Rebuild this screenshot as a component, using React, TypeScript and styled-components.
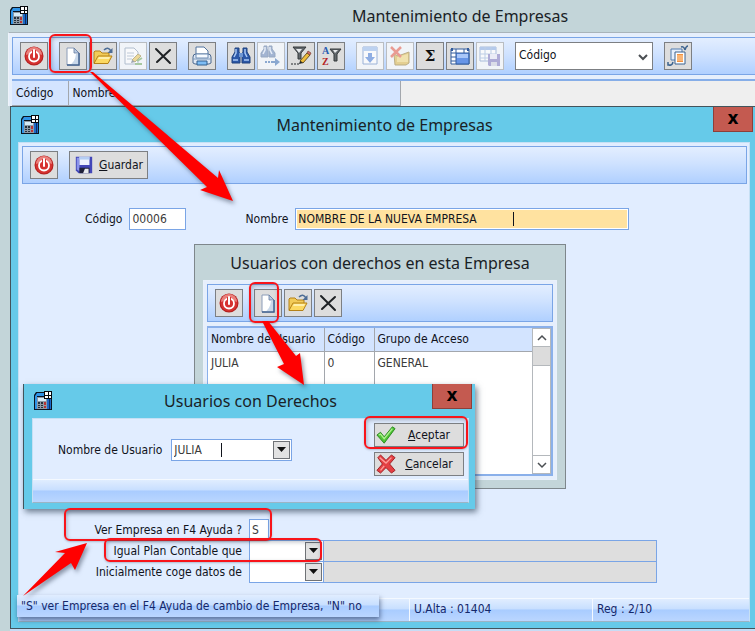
import React from "react";
import styled, { createGlobalStyle, css } from "styled-components";

const GlobalStyle = createGlobalStyle`
  *, *::before, *::after { box-sizing: border-box; }
  body { margin: 0; overflow: hidden; }
  body, button, input, select, table {
    font-family: "DejaVu Sans Condensed", "DejaVu Sans", sans-serif;
    font-size: 12px;
    line-height: 16px;
    color: #10131c;
  }
  svg { display: block; flex: none; }
`;

/* ---------- windows ---------- */

const Desktop = styled.div`
  position: relative;
  min-height: 100vh;
  background: #c3d5d9;
`;

const TitleBar = styled.header<{ $height: number }>`
  display: flex;
  align-items: center;
  height: ${(p) => p.$height}px;
  padding-left: 9px;
`;

const Title = styled.h1`
  flex: 1;
  margin: 0;
  text-align: center;
  font: 400 16px/24px "Noto Sans", sans-serif;
  color: #1a2226;
`;

const MainTitle = styled(Title)`
  padding-left: 136px;
`;

const CloseButton = styled.button`
  align-self: flex-start;
  width: 40px;
  height: 25px;
  padding: 0 0 3px;
  border: 1px solid #8d3f3a;
  border-top: 0;
  background: #c45a50;
  color: #000;
  font: 700 17px/20px "DejaVu Sans", sans-serif;
`;

const MainClient = styled.main`
  margin-left: 8px;
  padding: 4px 0 0 3px;
  border-top: 1px solid #a9b4ba;
  border-left: 1px solid #eef3fa;
  background: #e6effc;
`;

const EditWindow = styled.section`
  position: absolute;
  top: 106px;
  left: 10px;
  right: 0;
  padding: 0 5px 6px 7px;
  border: 1px solid #43545c;
  border-right: 0;
  background: #66cae9;
  box-shadow: 0 3px 0 #c7dcf5;
`;

const EditTitleBar = styled(TitleBar)`
  margin: 0 -3px 0 -7px;
`;

const EditTitle = styled(Title)`
  padding-left: 16px;
`;

const Client = styled.div`
  border: 1px solid #c6e0f4;
  border-bottom-color: #9cb4c4;
  background: #e1edff;
`;

const Panel = styled.section`
  width: 372px;
  margin: 14px 0 30px 175px;
  padding: 0 8px 8px;
  border: 1px solid #7e878c;
  background: #c3d5d9;
`;

const PanelTitle = styled(Title)`
  padding-right: 9px;
`;

const PanelClient = styled.div`
  padding: 3px;
  border: 1px solid #e9f1fb;
  background: #e6effc;
`;

const Dialog = styled.section`
  position: absolute;
  top: 384px;
  left: 23px;
  width: 452px;
  padding: 0 6px 6px 8px;
  border-left: 1px solid #43545c;
  background: #66cae9;
  box-shadow: 2px 3px 6px rgba(30, 50, 70, 0.6);
`;

const DialogTitleBar = styled(TitleBar)`
  margin: 0 -3px 0 -8px;
`;

const DialogTitle = styled(Title)`
  padding-left: 16px;
`;

/* ---------- toolbars ---------- */

const Toolbar = styled.div<{ $open?: boolean }>`
  display: flex;
  align-items: center;
  gap: 11px;
  padding: 4px 7px;
  border: 1px solid #7aa5e6;
  ${(p) => p.$open && css`border-right: 0;`}
  background: linear-gradient(#e3eeff, #cfe2ff 45%, #b0d0ff);
`;

const ClientToolbar = styled(Toolbar)`
  margin: 3px 2px 0 3px;
`;

const ToolGroup = styled.div`
  display: flex;
  gap: 2px;
`;

const ToolButton = styled.button<{ $faded?: boolean }>`
  display: flex;
  align-items: center;
  justify-content: center;
  gap: 5px;
  width: 28px;
  height: 28px;
  padding: 0;
  border: 1px solid ${(p) => (p.$faded ? "#b9bdc2" : "#7c7f83")};
  background: ${(p) => (p.$faded ? "#f1f4f8" : "#dddddd")};
  svg { opacity: ${(p) => (p.$faded ? 0.5 : 1)}; }
`;

const SaveButton = styled(ToolButton)`
  width: auto;
  padding: 0 4px;
`;

const SelectBox = styled.div`
  display: flex;
  align-items: center;
  position: relative;
  width: 138px;
  height: 28px;
  border: 1px solid #7c7f83;
  background: #fff;
  svg { position: absolute; right: 4px; top: 9px; pointer-events: none; }
`;

const Select = styled.select`
  flex: 1;
  height: 100%;
  padding: 0 20px 2px 3px;
  border: 0;
  outline: 0;
  appearance: none;
  background: transparent;
`;

/* ---------- tables ---------- */

const MainGrid = styled.table`
  width: 100%;
  margin-top: 4px;
  border-top: 2px solid #86aee8;
  border-collapse: collapse;
  background: #efefef;
  th {
    height: 25px;
    padding: 0 4px;
    border-right: 1px solid #a3a7ad;
    border-bottom: 1px solid #a3a7ad;
    background: #d3e4ff;
    text-align: left;
    font-weight: 400;
  }
`;

const CodeColumn = styled.th`
  width: 56px;
`;

const NameColumn = styled.th`
  width: 332px;
`;

const UserList = styled.div`
  display: flex;
  height: 150px;
  margin-top: 4px;
  border: 2px solid #8ab0ea;
  border-left-width: 1px;
  background: #fff;
`;

const UserTable = styled.table`
  flex: 1;
  height: 100%;
  border-collapse: collapse;
  th, td {
    padding: 0 3px;
    border-right: 1px solid #a3a7ad;
    text-align: left;
    font-weight: 400;
    white-space: nowrap;
  }
  th { height: 23px; border-bottom: 1px solid #a3a7ad; background: #d3e4ff; }
  td { height: 23px; color: #3b3b3b; }
  th:last-child, td:last-child { border-right: 0; }
  tr:last-child td { height: auto; }
`;

const ScrollBar = styled.div`
  display: flex;
  flex-direction: column;
  width: 19px;
  border: 1px solid #b4b8bc;
  border-width: 0 1px;
`;

const ScrollButton = styled.button`
  display: flex;
  align-items: center;
  justify-content: center;
  height: 19px;
  padding: 0;
  border: 1px solid #b4b8bc;
  border-width: 1px 0;
  background: #fff;
`;

const ScrollThumb = styled.div`
  height: 19px;
  margin-bottom: auto;
  border-bottom: 1px solid #b4b8bc;
  background: #dcdcdc;
`;

/* ---------- form ---------- */

const HeadRow = styled.div`
  display: flex;
  align-items: center;
  gap: 7px;
  margin-top: 24px;
  padding: 0 120px 0 66px;
`;

const NameLabel = styled.label`
  margin-left: 52px;
`;

const FieldBox = styled.div<{ $width?: number }>`
  position: relative;
  display: flex;
  ${(p) => (p.$width ? `width: ${p.$width}px;` : "flex: 1;")}
  height: 22px;
  padding: 1px;
  border: 1px solid #7aa5e6;
  background: #fff;
`;

const TextInput = styled.input<{ $active?: boolean }>`
  flex: 1;
  min-width: 0;
  width: 0;
  padding: 0 1px;
  border: 0;
  outline: 0;
  background: ${(p) => (p.$active ? "#ffe2a0" : "transparent")};
  color: ${(p) => (p.$active ? "#10131c" : "#3b3b3b")};
`;

const Caret = styled.span<{ $left: number }>`
  position: absolute;
  top: 3px;
  left: ${(p) => p.$left}px;
  width: 1px;
  height: 14px;
  background: #10131c;
`;

const DropButton = styled.button`
  display: flex;
  align-items: center;
  justify-content: center;
  width: 17px;
  padding: 0;
  border: 1px solid #6f7276;
  background: #e2e2e2;
`;

const OptionRows = styled.div`
  display: grid;
  grid-template-columns: 223px 1fr;
  column-gap: 7px;
  grid-auto-rows: 21px;
  align-items: center;
  padding: 0 92px 16px 0;
  label { text-align: right; }
`;

const OptionField = styled.div`
  display: flex;
`;

const Description = styled.output`
  flex: 1;
  margin-left: -1px;
  height: 22px;
  border: 1px solid #7aa5e6;
  background: #dedede;
`;

const StatusBar = styled.footer`
  display: flex;
  height: 23px;
  border-top: 1px solid #f4f9ff;
  background: linear-gradient(#e0edff, #c8dfff 45%, #a9ccff 50%, #bad6ff);
  color: #14286a;
`;

const StatusCell = styled.div<{ $width?: number }>`
  ${(p) => (p.$width ? `width: ${p.$width}px;` : "flex: 1;")}
  padding: 2px 4px;
  border-left: 1px solid #f4f9ff;
`;

const StatusSpace = styled.div`
  width: 390px;
`;

const Hint = styled.div`
  position: absolute;
  top: 595px;
  left: 17px;
  width: 362px;
  padding: 3px 4px;
  background: linear-gradient(#e0edff, #c8dfff 45%, #a9ccff 50%, #bad6ff);
  box-shadow: 1px 3px 5px rgba(30, 50, 90, 0.6);
  color: #14286a;
  white-space: nowrap;
`;

/* ---------- user dialog ---------- */

const DialogBody = styled.div`
  display: flex;
  align-items: center;
  gap: 9px;
  padding: 4px 4px 3px 25px;
`;

const DialogActions = styled.div`
  display: flex;
  flex-direction: column;
  gap: 5px;
  margin-left: auto;
`;

const ActionButton = styled.button`
  display: flex;
  align-items: center;
  width: 90px;
  height: 24px;
  padding: 0 1px;
  border: 1px solid #7c7f83;
  background: #dddddd;
  span { flex: 1; text-align: center; }
`;

/* ---------- annotations ---------- */

const Mark = styled.div<{ $x: number; $y: number; $w: number; $h: number }>`
  position: absolute;
  left: ${(p) => p.$x}px;
  top: ${(p) => p.$y}px;
  width: ${(p) => p.$w}px;
  height: ${(p) => p.$h}px;
  border: 2px solid #f8141a;
  border-radius: 6px;
  box-shadow: inset 1px 2px 4px rgba(60, 70, 90, 0.35), 0 1px 2px rgba(60, 70, 90, 0.3);
  pointer-events: none;
`;

const ArrowSvg = styled.svg<{ $x: number; $y: number }>`
  position: absolute;
  left: ${(p) => p.$x}px;
  top: ${(p) => p.$y}px;
  overflow: visible;
  fill: #ff0000;
  filter: drop-shadow(2px 3px 2px rgba(50, 60, 80, 0.5));
  pointer-events: none;
`;

/* ---------- icons ---------- */

const Icon = ({ children, size = 22 }: { children: React.ReactNode; size?: number }) => (
  <svg width={size} height={size} viewBox="0 0 22 22" aria-hidden="true">{children}</svg>
);

const AppIcon = () => (
  <svg width="20" height="20" viewBox="0 0 20 20" aria-hidden="true">
    <path d="M1 4 3 1h10v5h6v13H1z" fill="#0a1420" />
    <path d="M2 5 4 2h8v3H4v13H2z" fill="#2f93e6" />
    <path d="M14 8h4v10h-4z" fill="#1c68c8" />
    <path d="M16 8h1v10h-1z" fill="#0c3060" />
    <path d="M4 6h10v12H4z" fill="#8e9aa6" />
    <path d="M5 7h8v3H5z" fill="#d6ecf8" />
    <path d="M5 11h2v2H5zm3 0h2v2H8zM5 14h2v1H5zm3 0h2v1H8zM5 16h2v1H5zm3 0h2v1H8z" fill="#26313c" />
    <path d="M11 11h2v3h-2zm0 4h2v2h-2z" fill="#b73434" />
    <path d="M11 0h8v8h-8z" fill="#05080c" />
    <path d="M12 1h3v3h-3zm4 0h2v3h-2zm-4 4h3v2h-3zm4 0h2v2h-2z" fill="#fff" />
  </svg>
);

const PowerIcon = () => (
  <Icon>
    <circle cx="11" cy="11" r="9.5" fill="#b3201f" />
    <circle cx="11" cy="11" r="8.500" fill="#d63230" />
    <path d="M3 10a8 8 0 0 1 16 0q-8-4-16 0z" fill="#ea807c" />
    <circle cx="11" cy="11.500" r="5" fill="none" stroke="#fff" strokeWidth="1.800" />
    <path d="M9 5h4v7H9z" fill="#d63230" />
    <path d="M11 5v7" stroke="#fff" strokeWidth="2" strokeLinecap="round" />
  </Icon>
);

const PageIcon = () => (
  <Icon>
    <path d="M5 3h7l5 5v12H5z" fill="#fff" stroke="#8b9cb8" />
    <path d="M14 9h3v11H7q6-2 7-11z" fill="#c9d8ea" />
    <path d="M5 20h12V8" fill="none" stroke="#42618e" strokeWidth="1.500" />
    <path d="M12 3v5h5z" fill="#b9cbe2" stroke="#647ca1" strokeWidth=".8" />
  </Icon>
);

const FolderIcon = () => (
  <Icon>
    <path d="M2 18V7l1-1h5l2 2h7v3" fill="#f2cb58" stroke="#b58218" />
    <path d="M2 18.500 6 11h14l-4 7.500z" fill="#fcd962" stroke="#b58218" />
    <path d="M7 12h11l-1 2H6z" fill="#fff0ad" />
    <path d="M12 5q4-4 7 1" fill="none" stroke="#4d6d96" strokeWidth="1.500" />
    <path d="M20.500 3v5h-5z" fill="#4d6d96" />
  </Icon>
);

const EditIcon = () => (
  <Icon>
    <path d="M3 3h9l4 4v12H3z" fill="#fff" stroke="#7589a5" />
    <path d="M5 8h7M5 11h7M5 14h5" stroke="#8fa1b8" />
    <path d="m10 15 6-6 3 2-6 6z" fill="#e9bd3b" stroke="#8d7423" />
    <path d="m9 18 1-3 3 2z" fill="#475669" />
    <path d="M13 19h7M15 16l5-3" stroke="#5f9d4c" strokeWidth="2" />
  </Icon>
);

const DeleteIcon = () => (
  <Icon>
    <path d="m4 4 14 14M18 5 5 17" fill="none" stroke="#1f2225" strokeWidth="2" strokeLinecap="round" />
  </Icon>
);

const PrintIcon = () => (
  <Icon>
    <path d="M5 11V2h8l4 4v5" fill="#fff" stroke="#51739e" />
    <path d="M2 12q0-3 3-3h12q3 0 3 3v6l-2 1H4l-2-1z" fill="#dfe8f4" stroke="#4d6a91" />
    <path d="M5 9h12v4H5z" fill="#f7fbff" stroke="#6f8db4" />
    <path d="M2 14h18" stroke="#7f99bb" />
    <path d="M6 16h10v4H6z" fill="#7ebdf5" stroke="#35608f" />
  </Icon>
);

const FindIcon = () => (
  <Icon>
    <path d="M5 3h4v4l1 2v9H2v-6l3-5zM13 3h4v4l3 5v6h-8V9l1-2z" fill="#2c58a8" stroke="#20437e" />
    <path d="M6 4v4l-2 4M15 4v4l2 4M3 15h5M14 15h5" fill="none" stroke="#a9c8f4" strokeWidth="1.500" />
    <path d="M9 8h4v4H9z" fill="#6e96d2" />
  </Icon>
);

const FindNextIcon = () => (
  <Icon>
    <path d="M4 1h3v3l1 2v6H1V8l3-4zM9 1h3v3l3 4v4H9V6z" fill="#5676ad" stroke="#42618e" />
    <path d="M5 2v3L3 9M10 2v3l2 4" fill="none" stroke="#dbe7f8" strokeWidth="1.500" />
    <path d="M5 17h2m1 0h2m1 0h5" stroke="#285faa" strokeWidth="2" />
    <path d="m15 13 5 4-5 4z" fill="#285faa" />
  </Icon>
);

const FilterIcon = () => (
  <Icon>
    <path d="M3 2h13l-5 6v6H8V8z" fill="#63686d" stroke="#34383b" />
    <path d="M6 4h6L9 8z" fill="#e8eaec" />
    <path d="m10 16 7-8 3 2-7 8z" fill="#efbd3c" stroke="#6a5320" />
    <path d="m17 8 1-2 3 2-1 2z" fill="#d67161" stroke="#793f35" strokeWidth=".7" />
    <path d="m9 19 1-3 3 2z" fill="#22262a" />
    <path d="M1 19h2m1 0h2m1 0h2" stroke="#22262a" />
  </Icon>
);

const SortFilterIcon = () => (
  <Icon>
    <text x="2" y="9" fontFamily="Liberation Serif" fontWeight="700" fontSize="10" fill="#285cb2">A</text>
    <text x="2" y="20" fontFamily="Liberation Serif" fontWeight="700" fontSize="10" fill="#b52327">Z</text>
    <path d="M10 4h11l-4 5v7h-3V9z" fill="#63686d" stroke="#34383b" />
    <path d="M13 5h5l-3 3z" fill="#e8eaec" />
  </Icon>
);

const ImportIcon = () => (
  <Icon>
    <path d="M4 2h14v17H4z" fill="#fff" stroke="#4873b8" />
    <path d="M4 2h14v4H4z" fill="#8bb1ea" />
    <path d="M9 8h4v4h3l-5 6-5-6h3z" fill="#2f6bd0" />
  </Icon>
);

const ClearIcon = () => (
  <Icon>
    <path d="m5 9 4 2 11-4v11l-3 2H6z" fill="#d9ac2c" stroke="#856713" />
    <path d="m8 12 11-3v8H8z" fill="#f0d266" />
    <path d="m2 2 10 10M12 2 2 12" stroke="#e2452e" strokeWidth="2.500" />
  </Icon>
);

const SumIcon = () => (
  <Icon>
    <text x="11" y="16" textAnchor="middle" fontFamily="DejaVu Serif" fontWeight="700" fontSize="15" fill="#111">Σ</text>
  </Icon>
);

const GridIcon = () => (
  <Icon>
    <path d="M2 4h18v15H2z" fill="#fff" stroke="#335c9d" />
    <path d="M7 8h13v11H7z" fill="#6795e7" stroke="#335c9d" />
    <path d="M8 9h11v4H8z" fill="#a9c7f9" />
    <path d="M2 8h5M2 12h5M2 16h5M7 4v4M15 4v4" stroke="#335c9d" />
    <path d="M2 3h2v3H2zm16 0h2v3h-2z" fill="#335c9d" />
  </Icon>
);

const GridSaveIcon = () => (
  <Icon>
    <path d="M1 2h16v14H1z" fill="#fff" stroke="#6285bd" />
    <path d="M1 2h16v3H1z" fill="#7ba2df" />
    <path d="M1 9h16M1 13h16M6 2v14M12 2v14" stroke="#8ba9d4" />
    <path d="M9 9h12v12H10l-1-1z" fill="#6d64b5" />
    <path d="M11 9h7v5h-7z" fill="#e5e5f6" />
    <path d="M12 17h6v4h-6z" fill="#c7c7da" />
  </Icon>
);

const CopyIcon = () => (
  <Icon>
    <path d="M4 4h11v11H4z" fill="#e4eefc" stroke="#527cae" />
    <path d="M8 7h10v12H8z" fill="#fff" stroke="#3c638f" />
    <path d="M10 9h6v8h-6z" fill="#f2913f" />
    <path d="M10 11h6M10 13h6M10 15h6" stroke="#ffd9af" />
    <path d="M14 2q3-1 4 3M21 1q-2 0-3 4M2 20q3 1 4-3M1 17v3h3" fill="none" stroke="#3c638f" strokeWidth="1.500" />
  </Icon>
);

const SaveIcon = () => (
  <Icon size={20}>
    <path d="M2 2h18v18H5l-3-3z" fill="#4347b8" />
    <path d="M3 3h3v15l-3-2z" fill="#8c94ea" />
    <path d="M6 2h11v9H6z" fill="#eef3ff" />
    <path d="M6 2h11v3H6z" fill="#b4cdf4" />
    <path d="M6 14h11v6H6z" fill="#20223a" />
    <path d="M12 15h4v5h-6z" fill="#e9ebf0" />
  </Icon>
);

const CheckIcon = () => (
  <Icon size={20}>
    <path d="m1 11 4-3 4 5 9-11 3 2L9 20z" fill="#4fc436" stroke="#28841e" strokeLinejoin="round" />
    <path d="m3 11 2-1 4 5 9-11" fill="none" stroke="#adf08f" strokeWidth="1.500" />
  </Icon>
);

const CrossIcon = () => (
  <Icon size={20}>
    <path d="m2 4 3-3 6 6 6-6 4 3-6 7 6 7-4 3-6-6-6 6-4-3 6-7z" fill="#e43f43" stroke="#9c1d22" strokeLinejoin="round" />
    <path d="m4 4 7 6 6-6M5 18l4-5" fill="none" stroke="#ff9b98" strokeWidth="1.500" />
  </Icon>
);

const Chevron = ({ up = false, bold = false }: { up?: boolean; bold?: boolean }) => (
  <svg width="10" height="10" viewBox="0 0 10 10" aria-hidden="true">
    <path d={up ? "M1 7 5 3l4 4" : "M1 3l4 4 4-4"} fill="none" stroke="#4b4f53" strokeWidth={bold ? 2 : 1.5} />
  </svg>
);

const DropTriangle = () => (
  <svg width="9" height="5" viewBox="0 0 9 5" aria-hidden="true"><path d="M0 0h9L4.500 5z" fill="#111" /></svg>
);

/* ---------- composed parts ---------- */

type Tool = { name: string; icon: React.ReactNode; faded?: boolean };

const Tools = ({ items }: { items: Tool[] }) => (
  <ToolGroup>
    {items.map((t) => (
      <ToolButton key={t.name} type="button" aria-label={t.name} $faded={t.faded}>{t.icon}</ToolButton>
    ))}
  </ToolGroup>
);

const exit: Tool[] = [{ name: "Salir", icon: <PowerIcon /> }];
const records: Tool[] = [
  { name: "Nuevo", icon: <PageIcon /> },
  { name: "Abrir", icon: <FolderIcon /> },
  { name: "Editar", icon: <EditIcon />, faded: true },
  { name: "Eliminar", icon: <DeleteIcon /> },
];
const search: Tool[] = [
  { name: "Buscar", icon: <FindIcon /> },
  { name: "Buscar siguiente", icon: <FindNextIcon />, faded: true },
  { name: "Filtrar", icon: <FilterIcon /> },
  { name: "Ordenar", icon: <SortFilterIcon /> },
];
const output: Tool[] = [
  { name: "Importar", icon: <ImportIcon />, faded: true },
  { name: "Limpiar", icon: <ClearIcon />, faded: true },
  { name: "Sumar", icon: <SumIcon /> },
  { name: "Columnas", icon: <GridIcon /> },
  { name: "Guardar columnas", icon: <GridSaveIcon />, faded: true },
];

const Combo = ({ id, width, value = "", caret }: { id: string; width: number; value?: string; caret?: number }) => (
  <FieldBox $width={width}>
    <TextInput id={id} defaultValue={value} />
    {caret !== undefined && <Caret $left={caret} />}
    <DropButton type="button" aria-label="Desplegar"><DropTriangle /></DropButton>
  </FieldBox>
);

const UsersPanel = () => (
  <Panel>
    <TitleBar $height={35}><PanelTitle as="h2">Usuarios con derechos en esta Empresa</PanelTitle></TitleBar>
    <PanelClient>
      <Toolbar>
        <Tools items={exit} />
        <Tools items={records.filter((t) => !t.faded)} />
      </Toolbar>
      <UserList>
        <UserTable>
          <colgroup><col width="116" /><col width="50" /><col /></colgroup>
          <thead><tr><th>Nombre de Usuario</th><th>Código</th><th>Grupo de Acceso</th></tr></thead>
          <tbody>
            <tr><td>JULIA</td><td>0</td><td>GENERAL</td></tr>
            <tr><td /><td /><td /></tr>
          </tbody>
        </UserTable>
        <ScrollBar>
          <ScrollButton type="button" aria-label="Subir"><Chevron up /></ScrollButton>
          <ScrollThumb />
          <ScrollButton type="button" aria-label="Bajar"><Chevron /></ScrollButton>
        </ScrollBar>
      </UserList>
    </PanelClient>
  </Panel>
);

const CompanyWindow = () => (
  <EditWindow>
    <EditTitleBar $height={35}>
      <AppIcon />
      <EditTitle as="h2">Mantenimiento de Empresas</EditTitle>
      <CloseButton type="button" aria-label="Cerrar">x</CloseButton>
    </EditTitleBar>
    <Client>
      <ClientToolbar>
        <Tools items={exit} />
        <SaveButton type="button"><SaveIcon /><span><u>G</u>uardar</span></SaveButton>
      </ClientToolbar>
      <HeadRow>
        <label htmlFor="code">Código</label>
        <FieldBox $width={57}><TextInput id="code" defaultValue="00006" /></FieldBox>
        <NameLabel htmlFor="name">Nombre</NameLabel>
        <FieldBox>
          <TextInput id="name" $active defaultValue="NOMBRE DE LA NUEVA EMPRESA" />
          <Caret $left={217} />
        </FieldBox>
      </HeadRow>
      <UsersPanel />
      <OptionRows>
        <label htmlFor="visible">Ver Empresa en F4 Ayuda ?</label>
        <OptionField><FieldBox $width={20}><TextInput id="visible" defaultValue="S" /></FieldBox></OptionField>
        <label htmlFor="plan">Igual Plan Contable que</label>
        <OptionField><Combo id="plan" width={75} /><Description /></OptionField>
        <label htmlFor="source">Inicialmente coge datos de</label>
        <OptionField><Combo id="source" width={75} /><Description /></OptionField>
      </OptionRows>
      <StatusBar>
        <StatusSpace />
        <StatusCell $width={183}>U.Alta : 01404</StatusCell>
        <StatusCell>Reg : 2/10</StatusCell>
      </StatusBar>
    </Client>
  </EditWindow>
);

const UserDialog = () => (
  <Dialog role="dialog" aria-label="Usuarios con Derechos">
    <DialogTitleBar $height={34}>
      <AppIcon />
      <DialogTitle as="h2">Usuarios con Derechos</DialogTitle>
      <CloseButton type="button" aria-label="Cerrar">x</CloseButton>
    </DialogTitleBar>
    <Client>
      <DialogBody>
        <label htmlFor="user">Nombre de Usuario</label>
        <Combo id="user" width={121} value="JULIA" caret={49} />
        <DialogActions>
          <ActionButton type="button"><CheckIcon /><span><u>A</u>ceptar</span></ActionButton>
          <ActionButton type="button"><CrossIcon /><span><u>C</u>ancelar</span></ActionButton>
        </DialogActions>
      </DialogBody>
      <StatusBar />
    </Client>
  </Dialog>
);

const Arrow = ({ x, y, w, h, points }: { x: number; y: number; w: number; h: number; points: string }) => (
  <ArrowSvg $x={x} $y={y} width={w} height={h} viewBox={`0 0 ${w} ${h}`} aria-hidden="true">
    <polygon points={points} />
  </ArrowSvg>
);

export default function App() {
  return (
    <>
      <GlobalStyle />
      <Desktop>
        <TitleBar $height={32}>
          <AppIcon />
          <MainTitle>Mantenimiento de Empresas</MainTitle>
        </TitleBar>
        <MainClient>
          <Toolbar $open>
            <Tools items={exit} />
            <Tools items={records} />
            <Tools items={[{ name: "Imprimir", icon: <PrintIcon /> }]} />
            <Tools items={search} />
            <Tools items={output} />
            <SelectBox>
              <Select aria-label="Campo de búsqueda" defaultValue="Código">
                <option>Código</option>
                <option>Nombre</option>
              </Select>
              <Chevron bold />
            </SelectBox>
            <Tools items={[{ name: "Copiar", icon: <CopyIcon /> }]} />
          </Toolbar>
          <MainGrid>
            <thead><tr><CodeColumn>Código</CodeColumn><NameColumn>Nombre</NameColumn><td /></tr></thead>
          </MainGrid>
        </MainClient>
        <CompanyWindow />
        <UserDialog />
        <Hint role="status">"S" ver Empresa en el F4 Ayuda de cambio de Empresa, "N" no</Hint>

        <Mark $x={49} $y={34} $w={43} $h={39} />
        <Mark $x={249} $y={282} $w={30} $h={41} />
        <Mark $x={364} $y={416} $w={104} $h={33} />
        <Mark $x={64} $y={508} $w={208} $h={33} />
        <Mark $x={104} $y={538} $w={218} $h={24} />
        <Arrow x={90} y={72} w={143} h={129} points="0,0 3,0 128,106 129,98 143,129 110,118 117,115" />
        <Arrow x={262} y={321} w={42} h={64} points="0,0 6,0 34,35 38,32 42,64 15,46 22,43" />
        <Arrow x={23} y={543} w={64} h={54} points="0,53 42,10 32,9 64,0 52,27 48,20" />
      </Desktop>
    </>
  );
}
